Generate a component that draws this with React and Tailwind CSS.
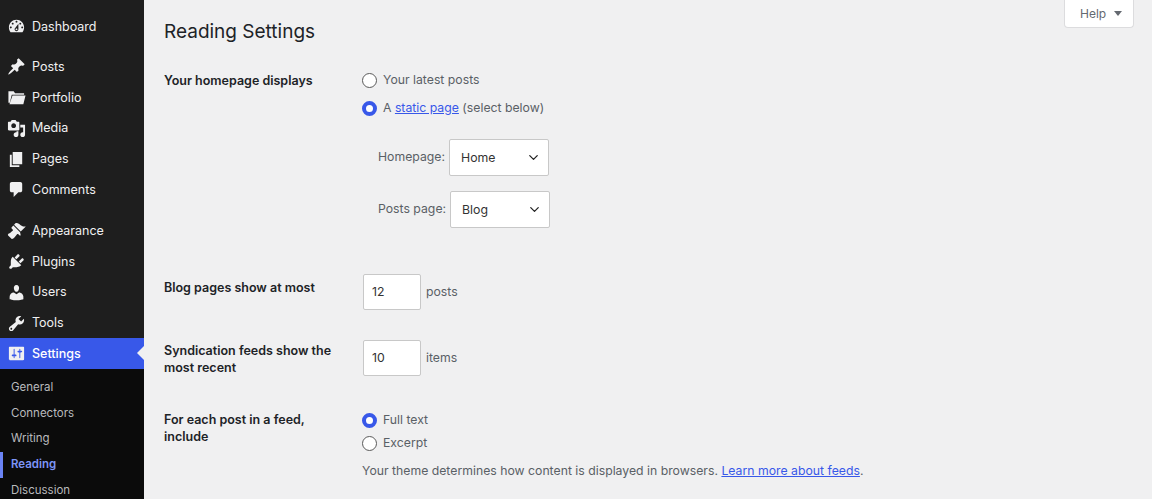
import { ChevronDown } from "lucide-react"

const icons = {
  dashboard: "M3.76 16h12.48c1.1-1.37 1.76-3.11 1.76-5 0-4.42-3.58-8-8-8s-8 3.58-8 8c0 1.89.66 3.63 1.76 5zM10 4c.55 0 1 .45 1 1s-.45 1-1 1-1-.45-1-1 .45-1 1-1zM6 6c.55 0 1 .45 1 1s-.45 1-1 1-1-.45-1-1 .45-1 1-1zm8 0c.55 0 1 .45 1 1s-.45 1-1 1-1-.45-1-1 .45-1 1-1zm-5.37 5.55L12 7v6c0 1.1-.9 2-2 2s-2-.9-2-2c0-.57.24-1.08.63-1.45zM4 10c.55 0 1 .45 1 1s-.45 1-1 1-1-.45-1-1 .45-1 1-1zm12 0c.55 0 1 .45 1 1s-.45 1-1 1-1-.45-1-1 .45-1 1-1zm-5 3c0-.55-.45-1-1-1s-1 .45-1 1 .45 1 1 1 1-.45 1-1z",
  posts: "M10.44 3.02l1.82-1.82 6.36 6.35-1.83 1.82c-1.05-.68-2.48-.57-3.41.36l-.75.75c-.92.93-1.04 2.35-.35 3.41l-1.83 1.82-2.41-2.41-2.8 2.79c-.42.42-3.38 2.71-3.8 2.29s1.86-3.39 2.28-3.81l2.79-2.79L4.1 9.36l1.83-1.82c1.05.69 2.48.57 3.4-.36l.75-.75c.93-.92 1.05-2.35.36-3.41z",
  portfolio: "M1.5 3.5h5.5l1.5 2H18v1.5H5L3 15.5H1.5z M5.8 8H19.5l-2.3 9H2.6z",
  media: "M13 11V4c0-.55-.45-1-1-1h-1.67L9 1H5L3.67 3H2c-.55 0-1 .45-1 1v7c0 .55.45 1 1 1h10c.55 0 1-.45 1-1zM7 4.5c1.38 0 2.5 1.12 2.5 2.5S8.38 9.5 7 9.5 4.5 8.38 4.5 7 5.62 4.5 7 4.5zM14 6h5v10.5c0 1.38-1.12 2.5-2.5 2.5S14 17.88 14 16.5s1.12-2.5 2.5-2.5c.17 0 .34.02.5.05V9h-3V6zm-4 8.05V13h2v3.5c0 1.38-1.12 2.5-2.5 2.5S7 17.88 7 16.5 8.12 14 9.5 14c.17 0 .34.02.5.05z",
  pages: "M6 15V2h10v13H6zm-1 1h8v2H3V5h2v11z",
  comments: "M5 2h9c1.1 0 2 .9 2 2v7c0 1.1-.9 2-2 2h-2l-5 5v-5H5c-1.1 0-2-.9-2-2V4c0-1.1.9-2 2-2z",
  appearance: "M14.48 11.06L7.41 3.99l1.5-1.5c.5-.56 2.3-.47 3.51.32 1.21.8 1.43 1.28 2.91 2.1 1.18.64 2.45 1.26 4.45.85zm-.71.71L6.7 4.7 4.93 6.47c-.39.39-.39 1.02 0 1.41l1.06 1.06c.39.39.39 1.03 0 1.42-.6.6-1.43 1.11-2.21 1.69-.35.26-.7.53-1.01.84C1.43 13.23.4 14.4 1.2 15.2l3.54 3.53c.8.8 1.96-.24 3.3-1.57.31-.31.59-.66.84-1.02.58-.78 1.09-1.61 1.69-2.21.39-.39 1.02-.39 1.41 0l1.06 1.06c.39.39 1.02.39 1.41 0z",
  plugins: "M13.11 4.36L9.87 7.6 8 5.73l3.24-3.24c.35-.34 1.05-.2 1.56.32.52.51.66 1.21.31 1.55zm-8 1.77l.91-1.12 9.01 9.01-1.19.84c-.71.71-2.63 1.16-3.82 1.16H6.14L4.9 17.26c-.59.59-1.54.59-2.12 0-.59-.58-.59-1.53 0-2.12l1.24-1.24v-3.88c0-1.13.4-3.19 1.09-3.89zm7.26 3.97l3.24-3.24c.34-.35 1.04-.21 1.55.31.52.51.66 1.21.31 1.55l-3.24 3.25z",
  users: "M10 9.25c-2.27 0-2.73-3.44-2.73-3.44C7 4.02 7.82 2 9.97 2c2.16 0 2.98 2.02 2.71 3.81 0 0-.41 3.44-2.68 3.44zm0 2.57L12.72 10c2.39 0 4.52 2.33 4.52 4.53v2.49s-3.65 1.13-7.24 1.13c-3.65 0-7.24-1.13-7.24-1.13v-2.49c0-2.25 1.94-4.48 4.47-4.48z",
  tools: "M16.68 9.77c-1.34 1.34-3.3 1.67-4.95.99l-5.41 6.52c-.99.99-2.59.99-3.58 0s-.99-2.59 0-3.57l6.52-5.42c-.68-1.65-.35-3.61.99-4.95 1.28-1.28 3.12-1.62 4.72-1.06l-2.89 2.89 2.82 2.82 2.86-2.87c.53 1.58.18 3.39-1.08 4.65zM3.81 16.21c.4.39 1.04.39 1.43 0 .4-.4.4-1.04 0-1.43-.39-.4-1.03-.4-1.43 0-.39.39-.39 1.03 0 1.43z",
  settings: "M18 16V4c0-.55-.45-1-1-1H3c-.55 0-1 .45-1 1v12c0 .55.45 1 1 1h14c.55 0 1-.45 1-1zM8 11h1c.55 0 1 .45 1 1s-.45 1-1 1H8v1.5c0 .28-.22.5-.5.5s-.5-.22-.5-.5V13H6c-.55 0-1-.45-1-1s.45-1 1-1h1V5.5c0-.28.22-.5.5-.5s.5.22.5.5V11zm5-2h-1c-.55 0-1-.45-1-1s.45-1 1-1h1V5.5c0-.28.22-.5.5-.5s.5.22.5.5V7h1c.55 0 1 .45 1 1s-.45 1-1 1h-1v5.5c0 .28-.22.5-.5.5s-.5-.22-.5-.5V9z",
}

const MenuItem = ({ icon, label, className = "" }) => (
  <div className={`flex items-center h-[30.8px] pl-[7px] gap-[6px] text-[12.5px] text-[#f0f0f1] ${className}`}>
    <svg viewBox="0 0 20 20" className="w-[19px] h-[19px] fill-[#f0f0f1] shrink-0">
      <path d={icons[icon]} />
    </svg>
    <span className="pt-[1px]">{label}</span>
  </div>
)

const SubItem = ({ label, active }) => (
  <div
    className={`flex items-center h-[25.7px] pl-[8px] text-[11.5px] border-l-[3px] ${
      active ? "border-[#6a83f5] text-[#7d95f7] font-semibold" : "border-transparent text-[#b9babd]"
    }`}
  >
    {label}
  </div>
)

const Radio = ({ checked }) =>
  checked ? (
    <span className="w-[15px] h-[15px] rounded-full border-[4px] border-[#3858e9] bg-white shrink-0" />
  ) : (
    <span className="w-[15px] h-[15px] rounded-full border border-[#5a5a5a] bg-white shrink-0" />
  )

const Select = ({ value }) => (
  <div className="flex items-center justify-between w-[100px] h-[37px] pl-[11px] pr-[7px] bg-white border-[1.5px] border-[#c8c8c8] rounded-[2px] text-[12.3px] text-[#333]">
    <span className="pt-[1px]">{value}</span>
    <ChevronDown size={15} strokeWidth={2} className="text-[#222]" />
  </div>
)

const NumberBox = ({ value }) => (
  <div className="flex items-center w-[58px] h-[36px] pl-[8px] bg-white border-[1.5px] border-[#c8c8c8] rounded-[2px] text-[12.3px] text-[#333]">
    {value}
  </div>
)

export default function App() {
  return (
    <div className="flex h-[499px] w-[1152px] overflow-hidden bg-[#f0f0f1] font-['Inter',sans-serif] text-[#5a6066]">
      {/* Sidebar */}
      <aside className="w-[144px] shrink-0 bg-[#1e1e1e] pt-[11px]">
        <MenuItem icon="dashboard" label="Dashboard" />
        <div className="mt-[9.5px]">
          <MenuItem icon="posts" label="Posts" />
          <MenuItem icon="portfolio" label="Portfolio" />
          <MenuItem icon="media" label="Media" />
          <MenuItem icon="pages" label="Pages" />
          <MenuItem icon="comments" label="Comments" />
        </div>
        <div className="mt-[10px]">
          <MenuItem icon="appearance" label="Appearance" />
          <MenuItem icon="plugins" label="Plugins" />
          <MenuItem icon="users" label="Users" />
          <MenuItem icon="tools" label="Tools" />
        </div>
        <div className="relative">
          <MenuItem icon="settings" label="Settings" className="bg-[#3858e9] font-medium text-white" />
          <span className="absolute right-0 top-[8px] border-y-[7px] border-r-[7px] border-y-transparent border-r-[#f0f0f1]" />
        </div>
        <div className="bg-[#0b0b0b] pt-[5.5px] h-[140px]">
          <SubItem label="General" />
          <SubItem label="Connectors" />
          <SubItem label="Writing" />
          <SubItem label="Reading" active />
          <SubItem label="Discussion" />
        </div>
      </aside>

      {/* Main */}
      <main className="relative flex-1 pl-[20px] pt-[18px] text-[12.25px]">
        <div className="absolute right-[18px] top-0 flex items-center gap-[8px] h-[28px] w-[70px] pl-[15px] bg-white border border-t-0 border-[#dcdcde] rounded-b-[4px] text-[12px] text-[#646970]">
          <span className="pt-[1px]">Help</span>
          <span className="border-x-[4px] border-t-[5px] border-x-transparent border-t-[#646970]" />
        </div>

        <h1 className="text-[19px] leading-[26px] text-[#1d2327] pt-[1px]">Reading Settings</h1>

        <div className="grid grid-cols-[198px_1fr] mt-[26px]">
          <div className="font-semibold text-[#1d2327] text-[12.5px] pt-[1px]">Your homepage displays</div>
          <div className="flex flex-col">
            <label className="flex items-center gap-[6px] h-[18px]">
              <Radio />
              <span className="pt-[1px]">Your latest posts</span>
            </label>
            <label className="flex items-center gap-[6px] h-[18px] mt-[10px]">
              <Radio checked />
              <span>
                A <span className="text-[#3858e9] underline">static page</span> (select below)
              </span>
            </label>
            <div className="flex items-center gap-[4px] ml-[16px] mt-[22px]">
              Homepage:
              <Select value="Home" />
            </div>
            <div className="flex items-center gap-[4px] ml-[16px] mt-[15px]">
              Posts page:
              <Select value="Blog" />
            </div>
          </div>

          <div className="font-semibold text-[#1d2327] text-[12.5px] mt-[51px]">Blog pages show at most</div>
          <div className="flex items-center gap-[5px] mt-[46px] ml-[1px]">
            <NumberBox value="12" />
            posts
          </div>

          <div className="font-semibold text-[#1d2327] text-[12.5px] leading-[17px] mt-[32px]">
            Syndication feeds show the most recent
          </div>
          <div className="flex items-center gap-[5px] mt-[30px] ml-[1px]">
            <NumberBox value="10" />
            <span className="pt-[1px]">items</span>
          </div>

          <div className="font-semibold text-[#1d2327] text-[12.5px] leading-[17px] mt-[35px] pr-[20px]">
            For each post in a feed, include
          </div>
          <div className="flex flex-col mt-[35px]">
            <label className="flex items-center gap-[6px] h-[18px]">
              <Radio checked />
              Full text
            </label>
            <label className="flex items-center gap-[6px] h-[18px] mt-[5px]">
              <Radio />
              <span className="pt-[1px]">Excerpt</span>
            </label>
            <p className="mt-[10px]">
              Your theme determines how content is displayed in browsers.{" "}
              <span className="text-[#3858e9] underline">Learn more about feeds</span>.
            </p>
          </div>
        </div>
      </main>
    </div>
  )
}
